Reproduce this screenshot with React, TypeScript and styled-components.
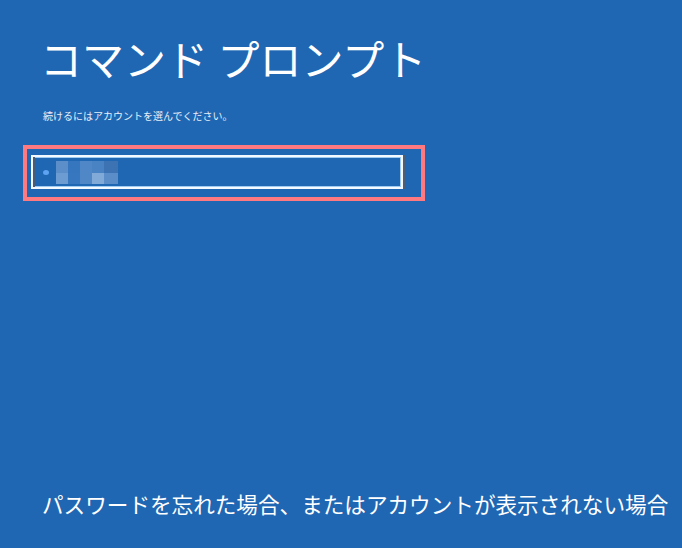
import React from 'react'
import styled, { createGlobalStyle } from 'styled-components'

const GlobalStyle = createGlobalStyle`
  html, body {
    margin: 0;
    padding: 0;
    height: 100%;
    background: #2067b3;
  }
  #root {
    height: 100%;
  }
`

const Screen = styled.div`
  display: flex;
  flex-direction: column;
  height: 100%;
  box-sizing: border-box;
  padding: 34px 0 29px 0;
  background: #2067b3;
  color: #ffffff;
  font-family: 'Noto Sans CJK JP', 'Noto Sans', sans-serif;
  overflow: hidden;
`

const Title = styled.h1`
  margin: 0 0 0 40px;
  font-size: 42px;
  font-weight: 400;
  line-height: 48px;
  letter-spacing: 0;
  white-space: nowrap;
`

const Prompt = styled.p`
  margin: 27px 0 0 43px;
  font-size: 10px;
  line-height: 14px;
  color: #e8f0fa;
`

const Highlight = styled.div`
  align-self: flex-start;
  margin: 22px 0 0 23px;
  padding: 6px 18px 8px 4px;
  border: 4px solid #ff7a80;
`

const AccountField = styled.div`
  display: flex;
  align-items: center;
  box-sizing: border-box;
  width: 372px;
  height: 34px;
  padding-left: 10px;
  border: 2px solid #f4f9ff;
  box-shadow: 2px 0 0 #4e5f74, inset 2px 0 0 #4b5d73, inset 0 0 0 1px #9fcaf2;
`

const Dot = styled.span`
  width: 6px;
  height: 5px;
  border-radius: 50%;
  background: #5ea3f2;
`

const Mosaic = styled.div`
  display: grid;
  grid-template-columns: 12px 12px 12px 12px 14px;
  grid-template-rows: 12px 11px;
  margin-left: 7px;
`

const Tile = styled.span<{ shade: string }>`
  background: ${(p) => p.shade};
`

const Footer = styled.div`
  margin: auto 0 0 42px;
  font-size: 21.6px;
  line-height: 30px;
  white-space: nowrap;
`

const tiles = [
  '#5c8fca', '#3576be', '#4f87c7', '#4a83c4', '#3d72b3',
  '#6c9cd1', '#3677bf', '#4f87c7', '#82aad9', '#5b8dc8',
]

const App = () => (
  <>
    <GlobalStyle />
    <Screen>
      <Title>コマンド プロンプト</Title>
      <Prompt>続けるにはアカウントを選んでください。</Prompt>
      <Highlight>
        <AccountField>
          <Dot />
          <Mosaic>
            {tiles.map((c, i) => (
              <Tile key={i} shade={c} />
            ))}
          </Mosaic>
        </AccountField>
      </Highlight>
      <Footer>パスワードを忘れた場合、またはアカウントが表示されない場合</Footer>
    </Screen>
  </>
)

export default App
